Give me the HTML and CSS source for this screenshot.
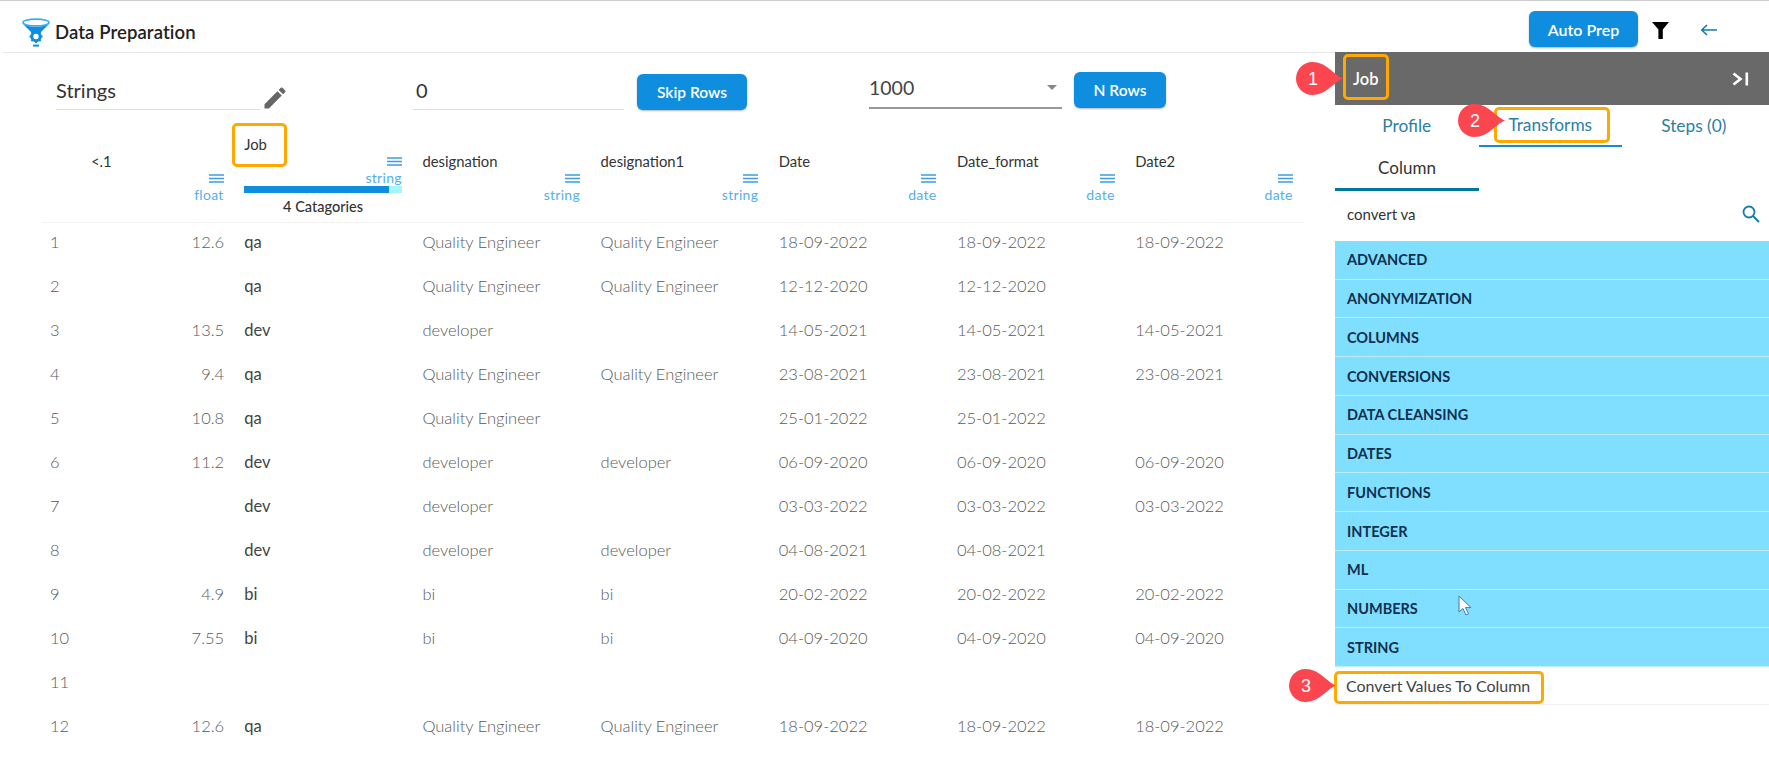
FILE: index.html
```html
<!DOCTYPE html>
<html lang="en">
<head>
<meta charset="utf-8">
<title>Data Preparation</title>
<link rel="stylesheet" href="styles.css">
</head>
<body>
<header class="topbar">
  <div class="brand">
    <svg class="logo" viewBox="0 0 28 29" aria-hidden="true">
      <path d="M0 5 C6 10 22 10 28 5 L19 14 L9 14 Z" fill="#0f8ee0"/>
      <ellipse cx="14" cy="4.5" rx="13" ry="3.4" fill="#fff" stroke="#35aef2" stroke-width="1.6"/>
      <circle cx="14" cy="18.5" r="4.2" fill="none" stroke="#0f8ee0" stroke-width="3"/>
      <path d="M14 12v13M7.5 18.5h13M9.4 13.9l9.2 9.2M18.6 13.9l-9.2 9.2" stroke="#0f8ee0" stroke-width="2" stroke-dasharray="2.4 8.2"/>
      <rect x="11" y="26.6" width="6" height="2" fill="#0f8ee0"/>
    </svg>
    <span class="brand-name">Data Preparation</span>
  </div>
  <div class="top-actions">
    <button class="btn btn-auto">Auto Prep</button>
    <svg class="ico-filter" viewBox="0 0 17 17" aria-hidden="true"><path d="M0 0h17l-6.2 7.6V17H6.4V7.6Z" fill="#000"/></svg>
    <svg class="ico-back" viewBox="0 0 18 14" aria-hidden="true"><path d="M17 7H2M7 2 1.8 7 7 12" fill="none" stroke="#0f7ea8" stroke-width="1.6"/></svg>
  </div>
</header>
<div class="main">
  <section class="content">
    <div class="toolbar">
      <div class="field field-name">Strings</div>
      <svg class="ico-pencil" viewBox="0 0 24 24" aria-hidden="true"><path d="M3 17.25V21h3.75L17.81 9.94l-3.75-3.75L3 17.25zM20.71 7.04a1 1 0 0 0 0-1.41l-2.34-2.34a1 1 0 0 0-1.41 0l-1.83 1.83 3.75 3.75 1.83-1.83z" fill="#666"/></svg>
      <div class="field field-skip">0</div>
      <button class="btn btn-skip">Skip Rows</button>
      <div class="select"><span>1000</span><i class="caret"></i></div>
      <button class="btn btn-n">N Rows</button>
    </div>
    <div class="table">
      <div class="hd"></div>
      <div class="hd"><div class="lbl lbl-first">&lt;.1</div><svg class="ham" viewBox="0 0 15 9"><path d="M0 1h15M0 4.500h15M0 8h15" stroke="#3d9de0" stroke-width="1.500"/></svg><div class="type">float</div></div>
      <div class="hd hd-job"><div class="lbl">Job</div><svg class="ham" viewBox="0 0 15 9"><path d="M0 1h15M0 4.500h15M0 8h15" stroke="#3d9de0" stroke-width="1.500"/></svg><div class="type">string</div><div class="bar"><i></i></div><div class="cats">4 Catagories</div></div>
      <div class="hd"><div class="lbl">designation</div><svg class="ham" viewBox="0 0 15 9"><path d="M0 1h15M0 4.500h15M0 8h15" stroke="#3d9de0" stroke-width="1.500"/></svg><div class="type">string</div></div>
      <div class="hd"><div class="lbl">designation1</div><svg class="ham" viewBox="0 0 15 9"><path d="M0 1h15M0 4.500h15M0 8h15" stroke="#3d9de0" stroke-width="1.500"/></svg><div class="type">string</div></div>
      <div class="hd"><div class="lbl">Date</div><svg class="ham" viewBox="0 0 15 9"><path d="M0 1h15M0 4.500h15M0 8h15" stroke="#3d9de0" stroke-width="1.500"/></svg><div class="type">date</div></div>
      <div class="hd"><div class="lbl">Date_format</div><svg class="ham" viewBox="0 0 15 9"><path d="M0 1h15M0 4.500h15M0 8h15" stroke="#3d9de0" stroke-width="1.500"/></svg><div class="type">date</div></div>
      <div class="hd"><div class="lbl">Date2</div><svg class="ham" viewBox="0 0 15 9"><path d="M0 1h15M0 4.500h15M0 8h15" stroke="#3d9de0" stroke-width="1.500"/></svg><div class="type">date</div></div>

      <div class="c n">1</div><div class="c v">12.6</div><div class="c j">qa</div><div class="c">Quality Engineer</div><div class="c">Quality Engineer</div><div class="c">18-09-2022</div><div class="c">18-09-2022</div><div class="c">18-09-2022</div>
      <div class="c n">2</div><div class="c v"></div><div class="c j">qa</div><div class="c">Quality Engineer</div><div class="c">Quality Engineer</div><div class="c">12-12-2020</div><div class="c">12-12-2020</div><div class="c"></div>
      <div class="c n">3</div><div class="c v">13.5</div><div class="c j">dev</div><div class="c">developer</div><div class="c"></div><div class="c">14-05-2021</div><div class="c">14-05-2021</div><div class="c">14-05-2021</div>
      <div class="c n">4</div><div class="c v">9.4</div><div class="c j">qa</div><div class="c">Quality Engineer</div><div class="c">Quality Engineer</div><div class="c">23-08-2021</div><div class="c">23-08-2021</div><div class="c">23-08-2021</div>
      <div class="c n">5</div><div class="c v">10.8</div><div class="c j">qa</div><div class="c">Quality Engineer</div><div class="c"></div><div class="c">25-01-2022</div><div class="c">25-01-2022</div><div class="c"></div>
      <div class="c n">6</div><div class="c v">11.2</div><div class="c j">dev</div><div class="c">developer</div><div class="c">developer</div><div class="c">06-09-2020</div><div class="c">06-09-2020</div><div class="c">06-09-2020</div>
      <div class="c n">7</div><div class="c v"></div><div class="c j">dev</div><div class="c">developer</div><div class="c"></div><div class="c">03-03-2022</div><div class="c">03-03-2022</div><div class="c">03-03-2022</div>
      <div class="c n">8</div><div class="c v"></div><div class="c j">dev</div><div class="c">developer</div><div class="c">developer</div><div class="c">04-08-2021</div><div class="c">04-08-2021</div><div class="c"></div>
      <div class="c n">9</div><div class="c v">4.9</div><div class="c j">bi</div><div class="c">bi</div><div class="c">bi</div><div class="c">20-02-2022</div><div class="c">20-02-2022</div><div class="c">20-02-2022</div>
      <div class="c n">10</div><div class="c v">7.55</div><div class="c j">bi</div><div class="c">bi</div><div class="c">bi</div><div class="c">04-09-2020</div><div class="c">04-09-2020</div><div class="c">04-09-2020</div>
      <div class="c n">11</div><div class="c v"></div><div class="c j"></div><div class="c"></div><div class="c"></div><div class="c"></div><div class="c"></div><div class="c"></div>
      <div class="c n">12</div><div class="c v">12.6</div><div class="c j">qa</div><div class="c">Quality Engineer</div><div class="c">Quality Engineer</div><div class="c">18-09-2022</div><div class="c">18-09-2022</div><div class="c">18-09-2022</div>
    </div>
  </section>
  <aside class="panel">
    <div class="panel-head">
      <span>Job</span>
      <svg class="ico-collapse" viewBox="0 0 17 14" aria-hidden="true"><path d="M1.500 1.500 8.500 7l-7 5.500" fill="none" stroke="#fff" stroke-width="2.600"/><rect x="13.500" y="0.500" width="2.600" height="13" fill="#fff"/></svg>
    </div>
    <div class="tabs">
      <div class="tab">Profile</div>
      <div class="tab tab-on">Transforms</div>
      <div class="tab">Steps (0)</div>
    </div>
    <div class="subtab">Column</div>
    <div class="search">
      <span>convert va</span>
      <svg class="ico-search" viewBox="0 0 18 18" aria-hidden="true"><circle cx="7" cy="7" r="5.500" fill="none" stroke="#0f7ea8" stroke-width="1.800"/><path d="m11 11 6 6" stroke="#0f7ea8" stroke-width="1.900"/></svg>
    </div>
    <div class="cats-list">
      <div class="cat">ADVANCED</div>
      <div class="cat">ANONYMIZATION</div>
      <div class="cat">COLUMNS</div>
      <div class="cat">CONVERSIONS</div>
      <div class="cat">DATA CLEANSING</div>
      <div class="cat">DATES</div>
      <div class="cat">FUNCTIONS</div>
      <div class="cat">INTEGER</div>
      <div class="cat">ML</div>
      <div class="cat">NUMBERS</div>
      <div class="cat">STRING</div>
    </div>
    <div class="result">Convert Values To Column</div>
  </aside>
</div>

<div class="mark mark-a"></div>
<div class="mark mark-b"></div>
<div class="mark mark-c"></div>
<div class="mark mark-d"></div>

<svg class="badge badge-1" viewBox="0 0 47 33"><path d="M47 16.500C38 20 30 33 16.500 33A16.500 16.500 0 1 1 16.500 0C30 0 38 13 47 16.500Z" fill="#fb4650"/><text x="17" y="23" class="badge-t">1</text></svg>
<svg class="badge badge-2" viewBox="0 0 47 33"><path d="M47 16.500C38 20 30 33 16.500 33A16.500 16.500 0 1 1 16.500 0C30 0 38 13 47 16.500Z" fill="#fb4650"/><text x="17" y="23" class="badge-t">2</text></svg>
<svg class="badge badge-3" viewBox="0 0 47 33"><path d="M47 16.500C38 20 30 33 16.500 33A16.500 16.500 0 1 1 16.500 0C30 0 38 13 47 16.500Z" fill="#fb4650"/><text x="17" y="23" class="badge-t">3</text></svg>

<svg class="cursor" viewBox="0 0 15 22" aria-hidden="true"><path d="M1 1v16l4-3.500 3 6.500 2.500-1.200-3-6.200H13Z" fill="#fff" stroke="#3f78b8" stroke-width="1"/></svg>
</body>
</html>
```

FILE: styles.css
```css
* { box-sizing: border-box; }
html, body { margin: 0; height: 757px; }
body {
  position: relative;
  overflow: hidden;
  background: #fff;
  font-family: Lato, "Noto Sans", sans-serif;
  color: #333;
}
button { font-family: inherit; border: 0; cursor: pointer; }

.topbar {
  height: 52px;
  border-top: 1px solid #ccc;
  display: flex;
  align-items: flex-start;
  justify-content: space-between;
}
.brand { display: flex; align-items: center; margin: 16px 0 0 22px; height: 30px; }
.logo { width: 28px; height: 29px; margin-right: 5px; }
.brand-name { font-size: 18.500px; font-weight: 600; color: #222; letter-spacing: 0.1px; }
.top-actions { display: flex; align-items: flex-start; margin-right: 43px; }

.btn {
  background: #0f8ee0;
  color: #fff;
  border-radius: 6px;
  font-weight: 600;
  font-size: 15.500px;
  box-shadow: 0 1px 2px rgba(0,0,0,.3);
}
.btn-auto { width: 109px; height: 36px; margin-top: 10px; font-size: 16px; }
.ico-filter { width: 17px; height: 17px; margin: 21px 0 0 14px; }
.ico-back { width: 26px; height: 14px; margin: 22px 4px 0 27px; }

.main { display: flex; height: 705px; }
.content {
  width: 1332px;
  margin-left: 3px;
  border-top: 1px solid #e6e6e6;
  overflow: hidden;
}
.toolbar { display: flex; align-items: flex-start; height: 70px; padding-left: 53px; }
.field {
  height: 38px;
  margin-top: 19px;
  border-bottom: 1px solid #ddd;
  font-size: 20px;
  line-height: 36px;
  color: #333;
}
.field-name { width: 204px; }
.ico-pencil { width: 28px; height: 28px; margin: 31px 0 0 1px; }
.field-skip { width: 211px; margin-left: 124px; padding-left: 3px; }
.btn-skip { width: 110px; height: 36px; margin: 21px 0 0 13px; }
.select {
  width: 193px;
  height: 41px;
  margin: 15px 0 0 122px;
  border-bottom: 2px solid #999;
  display: flex;
  align-items: center;
  justify-content: space-between;
  font-size: 19.500px;
  color: #444;
  padding: 1px 5px 1px 0;
}
.caret {
  width: 0;
  height: 0;
  border-left: 5px solid transparent;
  border-right: 5px solid transparent;
  border-top: 5px solid #888;
}
.btn-n { width: 92px; height: 36px; margin: 19px 0 0 12px; }

.table {
  display: grid;
  grid-template-columns: 16px repeat(7, 178.2px);
  grid-template-rows: 100px;
  grid-auto-rows: 44px;
  margin-left: 39px;
}
.hd {
  height: 100px;
  padding: 30px 12.5px 0 8px;
  border-bottom: 1px solid #f4f4f4;
  display: flex;
  flex-direction: column;
  align-items: flex-end;
}
.lbl {
  align-self: flex-start;
  font-size: 14.800px;
  line-height: 16px;
  color: #333;
  white-space: nowrap;
}
.lbl-first { margin-left: 25px; }
.ham { width: 15px; height: 9px; margin-top: 5px; flex: none; }
.type { font-size: 14px; line-height: 16px; color: #55b0ea; margin-top: 4px; letter-spacing: 0.3px; }
.hd-job { padding-top: 13px; }
.bar { width: 100%; height: 7px; background: #a4f5ff; flex: none; }
.bar i { display: block; width: 92%; height: 100%; background: #0f8ee0; }
.cats {
  align-self: center;
  font-size: 14.500px;
  line-height: 16px;
  margin-top: 6px;
  color: #333;
  font-weight: 500;
}

.c {
  height: 44px;
  padding: 0 12.5px 6px 8px;
  display: flex;
  align-items: center;
  font-size: 16.500px;
  font-weight: 300;
  color: #5a5a5a;
  white-space: nowrap;
}
.n { padding: 0 0 6px 8px; }
.v { justify-content: flex-end; padding-right: 12px; }
.j { color: #444; font-weight: 400; }

.panel { width: 434px; flex: none; }
.panel-head {
  height: 53px;
  background: #696969;
  color: #fff;
  font-size: 16.500px;
  font-weight: 600;
  padding: 0 20px 0 18px;
  display: flex;
  align-items: center;
  justify-content: space-between;
}
.ico-collapse { width: 17px; height: 14px; }
.tabs { display: flex; height: 42px; }
.tab {
  width: 143.5px;
  display: flex;
  align-items: center;
  justify-content: center;
  font-size: 17.300px;
  color: #2c7ea3;
  padding-bottom: 2px;
}
.tab-on { border-bottom: 2px solid #1c86d8; }
.subtab {
  width: 144px;
  height: 44px;
  border-bottom: 3px solid #00779e;
  display: flex;
  align-items: center;
  justify-content: center;
  font-size: 17px;
  color: #333;
}
.search {
  height: 50px;
  padding: 0 9px 4px 12px;
  display: flex;
  align-items: center;
  justify-content: space-between;
  font-size: 15px;
  color: #333;
}
.ico-search { width: 18px; height: 18px; }
.cats-list { height: 426px; display: flex; flex-direction: column; }
.cat {
  flex: 1;
  background: #80dfff;
  border-bottom: 1px solid #bdeeff;
  display: flex;
  align-items: center;
  padding-left: 12px;
  font-size: 14.500px;
  font-weight: 700;
  color: #12304f;
}
.result {
  height: 38px;
  border-bottom: 1px solid #f0f0f0;
  display: flex;
  align-items: center;
  padding-left: 11px;
  font-size: 16px;
  color: #444;
}

.mark {
  position: absolute;
  border: 3px solid #ffa800;
  border-radius: 5px;
}
.mark-a { left: 232px; top: 123px; width: 55px; height: 44px; }
.mark-b { left: 1343px; top: 54px; width: 46px; height: 46px; }
.mark-c { left: 1494px; top: 107px; width: 116px; height: 36px; }
.mark-d { left: 1334px; top: 671px; width: 210px; height: 33px; }

.badge { position: absolute; width: 47px; height: 33px; }
.badge-t { font-family: "Liberation Sans", Arial, sans-serif; font-size: 18px; fill: #fff; text-anchor: middle; }
.badge-1 { left: 1296px; top: 62px; }
.badge-2 { left: 1458px; top: 104px; }
.badge-3 { left: 1289px; top: 669px; }

.cursor { position: absolute; left: 1458px; top: 595px; width: 15px; height: 22px; }
```
